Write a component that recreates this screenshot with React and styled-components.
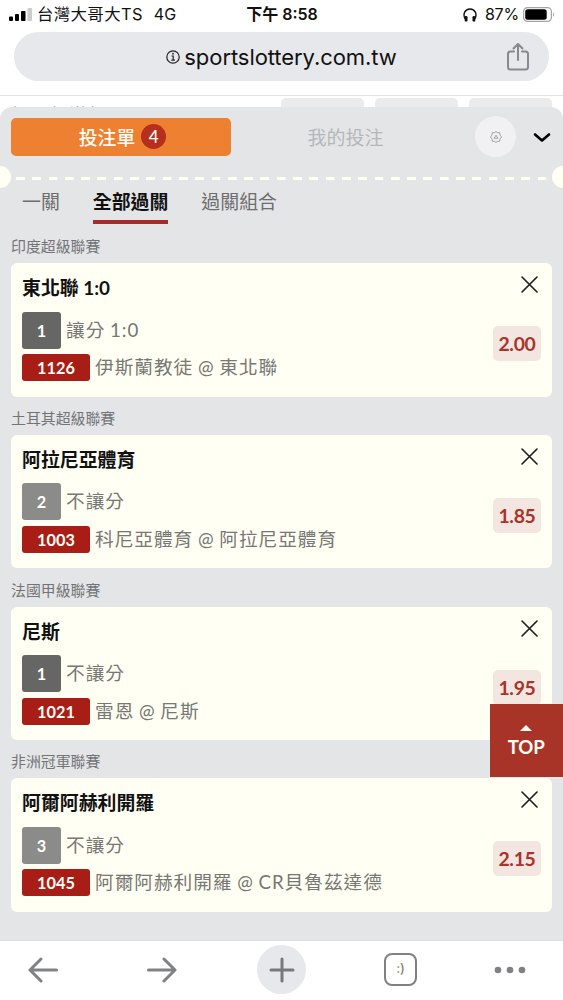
import React from 'react';
import styled, { createGlobalStyle } from 'styled-components';

const Global = createGlobalStyle`
  * { box-sizing: border-box; }
  body { margin: 0; background: #fff; font-family: Lato, "Noto Sans CJK TC", sans-serif; }
  button { border: 0; padding: 0; margin: 0; background: none; font: inherit; color: inherit; }
  svg { display: block; flex: none; }
`;

const Screen = styled.div`
  width: 563px;
  height: 1000px;
  display: flex;
  flex-direction: column;
  overflow: hidden;
`;

const StatusBar = styled.header`
  height: 32px;
  padding: 0 8px 3px 9px;
  display: grid;
  grid-template-columns: 1fr auto 1fr;
  align-items: center;
  font-family: Inter, "Noto Sans CJK TC", sans-serif;
  font-size: 16px;
  line-height: 29px;
  color: #111;
  white-space: nowrap;
`;
const StatusGroup = styled.div`
  display: flex;
  align-items: center;
  justify-content: ${p => (p.$end ? 'flex-end' : 'flex-start')};
`;
const Carrier = styled.span`
  margin-left: 5px;
  font-size: 16.4px;
  letter-spacing: 0.4px;
`;
const Network = styled.span`
  margin-left: 11px;
`;
const Clock = styled.span`
  font-weight: 600;
  font-size: 16px;
`;
const Percent = styled.span`
  margin: 0 4px 0 8px;
  letter-spacing: -0.2px;
`;

const AddressRow = styled.div`
  height: 64px;
  padding: 0 14px;
  border-bottom: 1px solid #e3e3e3;
`;
const AddressPill = styled.div`
  height: 49px;
  border-radius: 25px;
  background: #e7e8eb;
  display: grid;
  grid-template-columns: 40px 1fr 40px;
  align-items: center;
  padding: 0 11px;
`;
const Address = styled.div`
  grid-column: 2;
  display: flex;
  align-items: center;
  justify-content: center;
  gap: 4px;
  font-family: Inter, sans-serif;
  font-size: 22px;
  letter-spacing: -0.07px;
  color: #111;
`;
const Share = styled.button`
  display: flex;
  justify-content: center;
`;

const Peek = styled.div`
  height: 11px;
  flex: none;
  overflow: hidden;
  display: flex;
  justify-content: space-between;
  padding: 2px 11px 0;
`;
const PeekTitle = styled.div`
  margin-top: 6px;
  font-size: 19px;
  line-height: 24px;
  color: #777;
`;
const PeekTabs = styled.div`
  display: flex;
  gap: 11px;
`;
const PeekTab = styled.div`
  width: 83px;
  height: 30px;
  border-radius: 5px;
  background: #ebebeb;
`;

const Sheet = styled.main`
  position: relative;
  flex: 1;
  min-height: 0;
  overflow: hidden;
  background: #e4e5e7;
  border-radius: 12px 12px 0 0;
`;
const SheetHead = styled.div`
  display: flex;
  align-items: center;
  padding: 9px 11px 0;
`;
const SlipTab = styled.button`
  width: 220px;
  height: 38px;
  padding-left: 3px;
  border-radius: 5px;
  background: #ee8031;
  color: #fffdf5;
  font-size: 18.8px;
  font-weight: 500;
  display: flex;
  align-items: center;
  justify-content: center;
  gap: 6px;
`;
const Count = styled.span`
  width: 25px;
  height: 25px;
  border-radius: 50%;
  background: #b52f1c;
  font-size: 17px;
  line-height: 25px;
`;
const MyBets = styled.button`
  width: 229px;
  font-size: 19px;
  font-weight: 400;
  color: #b6b7b9;
`;
const Settings = styled.button`
  width: 41px;
  height: 41px;
  margin-left: 15px;
  border-radius: 50%;
  background: #f1f1f3;
  display: flex;
  align-items: center;
  justify-content: center;
`;
const Collapse = styled.button`
  margin-left: 17px;
`;

const Perforation = styled.div`
  height: 22px;
  margin-top: 9px;
  display: flex;
  justify-content: space-between;
  align-items: center;
`;
const Notch = styled.i`
  width: 11px;
  height: 22px;
  background: #fffff3;
  border-radius: ${p => (p.$right ? '11px 0 0 11px' : '0 11px 11px 0')};
`;
const Dashes = styled.div`
  width: 531px;
  height: 3px;
  margin-top: 2px;
  background: repeating-linear-gradient(90deg, #fffff3 0 8.5px, transparent 9px 16.3px);
`;

const PassTabs = styled.nav`
  height: 46px;
  padding: 0 22px;
  display: flex;
  align-items: flex-start;
  gap: 33px;
`;
const PassTab = styled.button`
  height: 36px;
  font-size: 18.9px;
  line-height: 27px;
  padding-bottom: 5px;
  font-weight: ${p => (p.$active ? 700 : 400)};
  color: ${p => (p.$active ? '#111' : '#6c6d6e')};
  border-bottom: 4px solid ${p => (p.$active ? '#a52c2b' : 'transparent')};
`;

const BetGroup = styled.section`
  height: 171.8px;
  padding: 0 11px;
`;
const League = styled.h2`
  margin: 0;
  height: 29px;
  padding-top: 1px;
  font-size: 14.9px;
  line-height: 22px;
  font-weight: 400;
  color: #737476;
`;
const Card = styled.article`
  height: 133.7px;
  border-radius: 6px;
  background: #fffff4;
  padding: 11px 11px 0;
  display: flex;
  justify-content: space-between;
`;
const BetInfo = styled.div`
  display: flex;
  flex-direction: column;
`;
const Team = styled.h3`
  margin: 0 0 10.5px;
  height: 27px;
  font-size: 18.9px;
  line-height: 27px;
  font-weight: 700;
  color: #111;
`;
const Line = styled.div`
  display: flex;
  align-items: center;
  gap: 5px;
  margin-bottom: 5.5px;
  font-size: 18.7px;
  letter-spacing: 0.95px;
  word-spacing: -1px;
  font-weight: 400;
  line-height: 27px;
  color: #777773;
  white-space: nowrap;
`;
const Tag = styled.span`
  width: ${p => (p.$code ? 68 : 39)}px;
  height: ${p => (p.$code ? 27 : 37)}px;
  border-radius: 3px;
  background: ${p => (p.$code ? '#a81e17' : p.$light ? '#8b8b8a' : '#666665')};
  color: #fffdf5;
  font-size: 16.3px;
  font-weight: 700;
  letter-spacing: 0;
  display: flex;
  align-items: center;
  justify-content: center;
`;
const BetSide = styled.div`
  display: flex;
  flex-direction: column;
  align-items: flex-end;
`;
const Remove = styled.button`
  margin: 2px 3px 33px 0;
`;
const Odds = styled.div`
  width: 48px;
  height: 35px;
  border-radius: 5px;
  background: #f3e6e0;
  color: #a8342a;
  font-size: 19.4px;
  letter-spacing: -0.3px;
  font-weight: 700;
  line-height: 35px;
  text-align: center;
`;

const TopButton = styled.button`
  position: absolute;
  right: 0;
  bottom: 163px;
  width: 73.5px;
  height: 73px;
  background: #a83427;
  color: #fffdf7;
  display: flex;
  flex-direction: column;
  align-items: center;
  padding-top: 21px;
  font-size: 18.6px;
  font-weight: 700;
  line-height: 24px;
  gap: 4px;
`;

const BottomBar = styled.footer`
  height: 60px;
  flex: none;
  border-top: 1px solid #dcdddf;
  background: #fff;
  padding-bottom: 2px;
  display: grid;
  grid-template-columns: 86px 152px 87px 151px 68px;
  align-items: center;
`;
const NavButton = styled.button`
  display: flex;
  justify-content: center;
`;
const PlusDisc = styled.span`
  width: 49px;
  height: 49px;
  border-radius: 50%;
  background: #e7e8eb;
  display: flex;
  align-items: center;
  justify-content: center;
`;
const TabsBox = styled.span`
  width: 33px;
  height: 33px;
  border: 2.5px solid #808184;
  border-radius: 8px;
  color: #808184;
  font: 500 13px/27px Inter, sans-serif;
  text-align: center;
`;

const bets = [
  { league: '印度超級聯賽', team: '東北聯 1:0', pick: '1', type: '讓分 1:0', code: '1126', match: '伊斯蘭教徒 @ 東北聯', odds: '2.00' },
  { league: '土耳其超級聯賽', team: '阿拉尼亞體育', pick: '2', light: true, type: '不讓分', code: '1003', match: '科尼亞體育 @ 阿拉尼亞體育', odds: '1.85' },
  { league: '法國甲級聯賽', team: '尼斯', pick: '1', type: '不讓分', code: '1021', match: '雷恩 @ 尼斯', odds: '1.95' },
  { league: '非洲冠軍聯賽', team: '阿爾阿赫利開羅', pick: '3', light: true, type: '不讓分', code: '1045', match: '阿爾阿赫利開羅 @ CR貝魯茲達德', odds: '2.15' },
];

function Bet({ bet }) {
  return (
    <BetGroup>
      <League>{bet.league}</League>
      <Card>
        <BetInfo>
          <Team>{bet.team}</Team>
          <Line><Tag $light={bet.light}>{bet.pick}</Tag>{bet.type}</Line>
          <Line><Tag $code>{bet.code}</Tag>{bet.match}</Line>
        </BetInfo>
        <BetSide>
          <Remove aria-label="remove">
            <svg width="17" height="17" viewBox="0 0 17 17" stroke="#1c1c1c" strokeWidth="1.6" strokeLinecap="round">
              <path d="M1 1l15 15M16 1L1 16" />
            </svg>
          </Remove>
          <Odds>{bet.odds}</Odds>
        </BetSide>
      </Card>
    </BetGroup>
  );
}

export default function App() {
  return (
    <Screen>
      <Global />
      <StatusBar>
        <StatusGroup>
          <svg width="23" height="13" viewBox="0 0 23 13" fill="#000">
            <rect x="0" y="8.5" width="4" height="4.5" rx="1" />
            <rect x="6" y="6" width="4" height="7" rx="1" />
            <rect x="12" y="3" width="4.5" height="10" rx="1" />
            <rect x="18.5" y="0" width="4.5" height="13" rx="1" fill="#ccc" />
          </svg>
          <Carrier>台灣大哥大TS</Carrier>
          <Network>4G</Network>
        </StatusGroup>
        <Clock>下午 8:58</Clock>
        <StatusGroup $end>
          <svg width="14" height="14" viewBox="0 0 14 14">
            <path d="M2.2 11C-.6 6 2 1 7 1s7.600 5 4.800 10" fill="none" stroke="#111" strokeWidth="1.4" />
            <rect x="1.700" y="8" width="2.800" height="5.600" rx="1.200" fill="#111" />
            <rect x="9.500" y="8" width="2.800" height="5.600" rx="1.200" fill="#111" />
          </svg>
          <Percent>87%</Percent>
          <svg width="32" height="15" viewBox="0 0 32 15">
            <rect x=".6" y=".6" width="27.800" height="13.800" rx="4" fill="none" stroke="#a5a5a5" strokeWidth="1.200" />
            <rect x="2.200" y="2.200" width="21.500" height="10.600" rx="2.500" fill="#000" />
            <path d="M30 5q2 2.500 0 5z" fill="#a5a5a5" />
          </svg>
        </StatusGroup>
      </StatusBar>

      <AddressRow>
        <AddressPill>
          <Address>
            <svg width="14" height="14" viewBox="0 0 14 14" fill="none" stroke="#222" strokeWidth="1.200">
              <circle cx="7" cy="7" r="6.200" />
              <path d="M5.500 6h1.700v4M5.300 10.200h3.600" />
              <circle cx="7" cy="3.700" r=".9" fill="#222" stroke="none" />
            </svg>
            sportslottery.com.tw
          </Address>
          <Share aria-label="share">
            <svg width="22" height="28" viewBox="0 0 22 28" fill="none" stroke="#88898d" strokeWidth="2" strokeLinecap="round" strokeLinejoin="round">
              <path d="M7 8.500H3.500Q1 8.500 1 11v13q0 2.500 2.500 2.500h15Q21 26.500 21 24V11q0-2.500-2.500-2.500H15M11 17V1.500M6.500 5.500L11 1l4.500 4.500" />
            </svg>
          </Share>
        </AddressPill>
      </AddressRow>

      <Peek>
        <PeekTitle>如足俱樂部</PeekTitle>
        <PeekTabs><PeekTab /><PeekTab /><PeekTab /></PeekTabs>
      </Peek>

      <Sheet>
        <SheetHead>
          <SlipTab>投注單<Count>4</Count></SlipTab>
          <MyBets>我的投注</MyBets>
          <Settings aria-label="settings">
            <svg width="12" height="12" viewBox="0 0 12 12" fill="none" stroke="#999a9d" strokeWidth=".9" strokeLinejoin="round">
              <path d="M6 .5L7.400 1.600 9.700 1.800 10.200 4.200 11.500 6 10.200 7.800 9.700 10.200 7.400 10.400 6 11.500 4.600 10.400 2.300 10.200 1.800 7.800.5 6 1.800 4.200 2.300 1.800 4.600 1.600z" />
              <path d="M6 4.200l1.900 3.100H4.100z" />
            </svg>
          </Settings>
          <Collapse aria-label="collapse">
            <svg width="18" height="12" viewBox="0 0 18 12" fill="none" stroke="#000" strokeWidth="2.600" strokeLinecap="round" strokeLinejoin="round">
              <path d="M2 3.500l7 6 7-6" />
            </svg>
          </Collapse>
        </SheetHead>
        <Perforation><Notch /><Dashes /><Notch $right /></Perforation>
        <PassTabs>
          <PassTab>一關</PassTab>
          <PassTab $active>全部過關</PassTab>
          <PassTab>過關組合</PassTab>
        </PassTabs>
        {bets.map(b => <Bet key={b.code} bet={b} />)}
        <TopButton>
          <svg width="12" height="6" viewBox="0 0 12 6" fill="#fffdf7"><path d="M0 6l6-6 6 6z" /></svg>
          TOP
        </TopButton>
      </Sheet>

      <BottomBar>
        <NavButton aria-label="back">
          <svg width="30" height="26" viewBox="0 0 30 26" fill="none" stroke="#808184" strokeWidth="3" strokeLinecap="round" strokeLinejoin="round">
            <path d="M28.500 13H2M13 2L2 13l11 11" />
          </svg>
        </NavButton>
        <NavButton aria-label="forward">
          <svg width="30" height="26" viewBox="0 0 30 26" fill="none" stroke="#808184" strokeWidth="3" strokeLinecap="round" strokeLinejoin="round">
            <path d="M1.500 13H28M17 2l11 11-11 11" />
          </svg>
        </NavButton>
        <NavButton aria-label="new tab">
          <PlusDisc>
            <svg width="26" height="26" viewBox="0 0 26 26" stroke="#77787b" strokeWidth="3" strokeLinecap="round">
              <path d="M13 2v22M2 13h22" />
            </svg>
          </PlusDisc>
        </NavButton>
        <NavButton aria-label="tabs"><TabsBox>:)</TabsBox></NavButton>
        <NavButton aria-label="more">
          <svg width="32" height="8" viewBox="0 0 32 8" fill="#808184">
            <circle cx="4" cy="4" r="3.300" /><circle cx="16" cy="4" r="3.300" /><circle cx="28" cy="4" r="3.300" />
          </svg>
        </NavButton>
      </BottomBar>
    </Screen>
  );
}
